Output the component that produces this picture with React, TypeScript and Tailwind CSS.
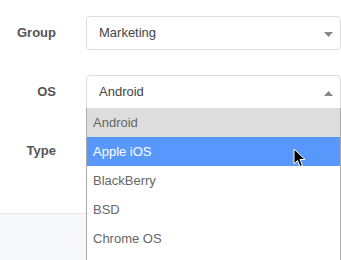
import React from 'react';

const OPTIONS = ['Android', 'Apple iOS', 'BlackBerry', 'BSD', 'Chrome OS'];

const Arrow: React.FC<{ up?: boolean }> = ({ up }) => (
  <svg width="9" height="5" viewBox="0 0 9 5" className="absolute right-[7px] top-[15px]">
    {up ? <path d="M0 5 L4.5 0 L9 5 Z" fill="#888" /> : <path d="M0 0 L4.5 5 L9 0 Z" fill="#888" />}
  </svg>
);

export default function App() {
  return (
    <div
      className="relative w-[341px] h-[260px] overflow-hidden bg-white"
      style={{ fontFamily: '"Liberation Sans", Arial, sans-serif' }}
    >
      <div className="pt-[16px] flex flex-col gap-[25px]">
        {/* Group */}
        <div className="flex items-center">
          <label className="w-[56px] text-right text-[13px] font-bold text-[#555]">Group</label>
          <div className="relative ml-[30px] flex-1 h-[34px] border border-[#ddd] rounded-[4px] flex items-center pl-[12px] text-[13px] text-[#444]">
            Marketing
            <Arrow />
          </div>
        </div>

        {/* OS */}
        <div className="flex items-center">
          <label className="w-[56px] text-right text-[13px] font-bold text-[#555]">OS</label>
          <div className="relative ml-[30px] flex-1 h-[34px] border border-[#ddd] rounded-t-[4px] flex items-center pl-[12px] text-[13px] text-[#444]">
            Android
            <Arrow up />
          </div>
        </div>

        {/* Type */}
        <div className="flex items-center">
          <label className="w-[56px] text-right text-[13px] font-bold text-[#555]">Type</label>
          <div className="ml-[30px] flex-1 h-[34px]" />
        </div>
      </div>

      {/* footer */}
      <div className="absolute left-0 right-0 top-[213px] bottom-0 bg-[#f7f8fa] border-t border-[#e5e5e5]" />

      {/* open dropdown */}
      <div className="absolute left-[86px] w-[255px] top-[108px] bottom-0 bg-white border-x border-[#aaa]">
        {OPTIONS.map((o, i) => (
          <div
            key={o}
            className={`h-[29px] flex items-center pl-[6px] text-[13px] ${
              i === 0 ? 'bg-[#ddd] text-[#666]' : i === 1 ? 'bg-[#5897fb] text-white' : 'text-[#666]'
            }`}
          >
            {o}
          </div>
        ))}
      </div>

      {/* mouse cursor */}
      <svg width="13" height="20" viewBox="0 0 13 20" className="absolute left-[293px] top-[148px]">
        <path
          d="M1 1 L1 16 L4.5 12.5 L7 18.5 L9.5 17.5 L7 11.5 L12 11.5 Z"
          fill="#000"
          stroke="#fff"
          strokeWidth="1"
          strokeLinejoin="round"
        />
      </svg>
    </div>
  );
}
